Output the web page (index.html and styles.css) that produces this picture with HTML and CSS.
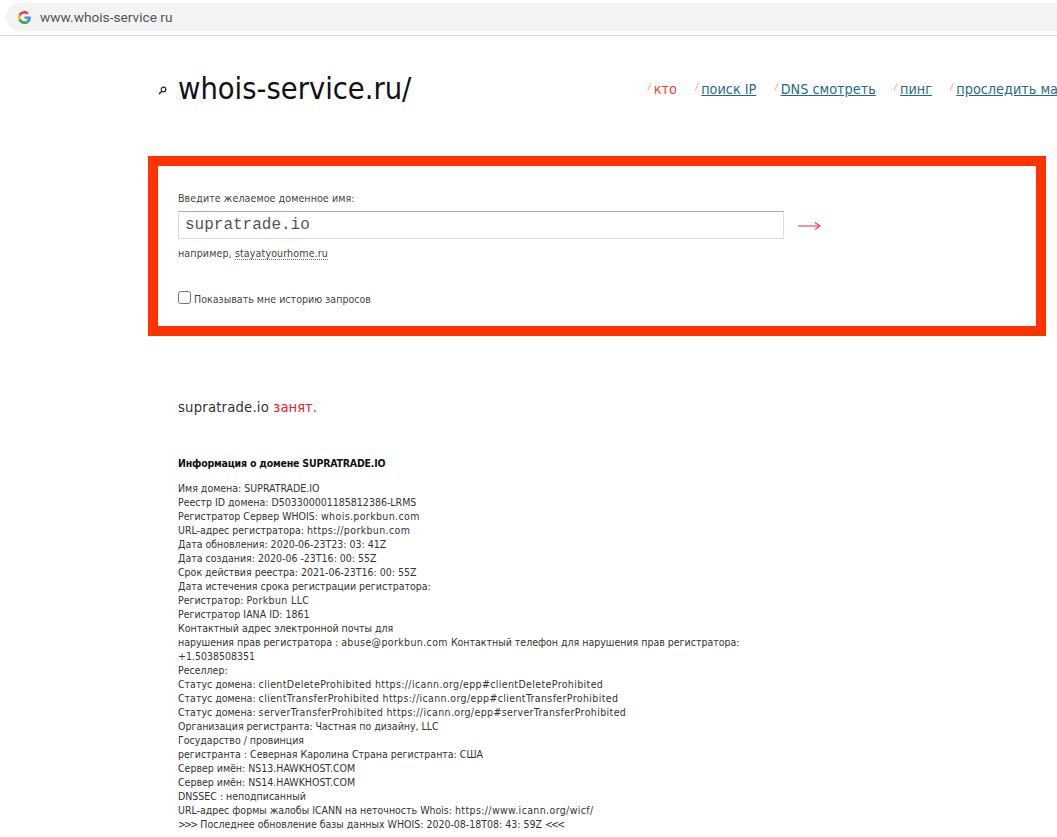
FILE: index.html
```html
<!DOCTYPE html>
<html lang="ru">
<head>
<meta charset="utf-8">
<title>whois-service.ru</title>
<link rel="stylesheet" href="styles.css">
</head>
<body>
<div class="browser-bar">
  <div class="address">
    <svg class="g-logo" width="13" height="13" viewBox="0 0 48 48"><path fill="#EA4335" d="M24 9.500c3.500 0 6.700 1.300 9.100 3.500l6.800-6.800C35.800 2.400 30.300 0 24 0 14.600 0 6.500 5.400 2.600 13.200l7.900 6.100C12.400 13.600 17.700 9.500 24 9.500z"/><path fill="#4285F4" d="M46.900 24.500c0-1.600-.1-3.100-.4-4.500H24v9h12.900c-.6 3-2.200 5.500-4.700 7.200l7.700 6c4.500-4.200 7-10.300 7-17.700z"/><path fill="#FBBC05" d="M10.500 28.700c-.5-1.400-.8-3-.8-4.700s.3-3.200.8-4.700l-7.900-6.100C.9 16.500 0 20.100 0 24s.9 7.500 2.600 10.800l7.900-6.100z"/><path fill="#34A853" d="M24 48c6.500 0 11.900-2.100 15.900-5.800l-7.700-6c-2.200 1.400-4.900 2.300-8.200 2.300-6.300 0-11.600-4.100-13.500-9.800l-7.900 6.100C6.500 42.600 14.600 48 24 48z"/></svg>
    <span class="url">www.whois-service ru</span>
  </div>
</div>
<div class="page">
  <header class="head">
    <div class="brand">
      <svg class="lens" width="9" height="9" viewBox="0 0 9 9"><circle cx="5.500" cy="3.500" r="2.300" fill="none" stroke="#222" stroke-width="1.200"/><path d="M3.800 5.200 1 8" stroke="#222" stroke-width="1.400"/></svg>
      <span class="logo">whois-service.ru/</span>
    </div>
    <nav class="nav">
      <span class="nav-item current"><i>/</i>кто</span>
      <span class="nav-item"><i>/</i><a href="#">поиск IP</a></span>
      <span class="nav-item"><i>/</i><a href="#">DNS смотреть</a></span>
      <span class="nav-item"><i>/</i><a href="#">пинг</a></span>
      <span class="nav-item"><i>/</i><a href="#">проследить маршрут</a></span>
    </nav>
  </header>
  <form class="search">
    <label class="field-label">Введите желаемое доменное имя:</label>
    <div class="field-row">
      <div class="input">supratrade.io</div>
      <svg class="arrow" width="23" height="10" viewBox="0 0 23 10"><path d="M0 5h21" stroke="#e8604f" stroke-width="1.300"/><path d="M17 1.500 22 5l-5 3.500" fill="none" stroke="#e8402f" stroke-width="1.200"/></svg>
    </div>
    <p class="example">например, <span class="dotted">stayatyourhome.ru</span></p>
    <label class="history"><span class="box"></span>Показывать мне историю запросов</label>
  </form>
  <p class="status">supratrade.io <span class="taken">занят.</span></p>
  <h3 class="info-title">Информация о домене SUPRATRADE.IO</h3>
  <div class="info">
    <div>Имя домена: SUPRATRADE.IO</div>
    <div>Реестр ID домена: D503300001185812386-LRMS</div>
    <div>Регистратор Сервер WHOIS: <span class="lat">whois.porkbun.com</span></div>
    <div>URL-адрес регистратора: <span class="lat">https://porkbun.com</span></div>
    <div>Дата обновления: 2020-06-23T23: 03: 41Z</div>
    <div>Дата создания: 2020-06 -23T16: 00: 55Z</div>
    <div>Срок действия реестра: 2021-06-23T16: 00: 55Z</div>
    <div>Дата истечения срока регистрации регистратора:</div>
    <div>Регистратор: <span class="lat">Porkbun LLC</span></div>
    <div>Регистратор IANA ID: 1861</div>
    <div>Контактный адрес электронной почты для</div>
    <div>нарушения прав регистратора : <span class="lat">abuse@porkbun.com</span> Контактный телефон для нарушения прав регистратора:</div>
    <div>+1.5038508351</div>
    <div>Реселлер:</div>
    <div>Статус домена: <span class="lat">clientDeleteProhibited https://icann.org/epp#clientDeleteProhibited</span></div>
    <div>Статус домена: <span class="lat">clientTransferProhibited https://icann.org/epp#clientTransferProhibited</span></div>
    <div>Статус домена: <span class="lat">serverTransferProhibited https://icann.org/epp#serverTransferProhibited</span></div>
    <div>Организация регистранта: Частная по дизайну, LLC</div>
    <div>Государство / провинция</div>
    <div>регистранта : Северная Каролина Страна регистранта: США</div>
    <div>Сервер имён: NS13.HAWKHOST.COM</div>
    <div>Сервер имён: NS14.HAWKHOST.COM</div>
    <div>DNSSEC : неподписанный</div>
    <div>URL-адрес формы жалобы ICANN на неточность Whois: <span class="lat">https://www.icann.org/wicf/</span></div>
    <div><span class="ang">&gt;&gt;&gt;</span> Последнее обновление базы данных WHOIS: 2020-08-18T08: 43: 59Z <span class="ang">&lt;&lt;&lt;</span></div>
  </div>
</div>
</body>
</html>
```
FILE: styles.css
```css
html, body { margin: 0; padding: 0; height: 837px; overflow: hidden; background: #fff; }
body { font-family: "DejaVu Sans Condensed", "DejaVu Sans", sans-serif; color: #333; width: 1057px; }
.browser-bar { padding: 3px 0 0 6px; box-sizing: border-box; border-bottom: 1px solid #dadce0; height: 36px; }
.address { height: 28px; background: #f1f3f4; border-radius: 14px 0 0 14px; display: flex; align-items: center; padding-left: 12px; }
.g-logo { margin-right: 9px; }
.url { font: 13.700px "Roboto", sans-serif; color: #555; }
.page { padding-left: 148px; width: 1000px; }
.head { display: flex; height: 120px; align-items: flex-start; white-space: nowrap; }
.brand { display: flex; align-items: center; width: 498px; padding: 35px 0 0 10px; box-sizing: border-box; }
.lens { margin-right: 11px; margin-top: 4px; }
.logo { font: 30.500px "DejaVu Sans Condensed", "DejaVu Sans", sans-serif; color: #111; }
.nav { display: flex; gap: 18.600px; padding: 45px 0 0 2px; font-size: 14.300px; }
.nav-item i { color: #f08a70; font-size: 9px; margin-right: 3px; vertical-align: 4px; }
.nav-item a { color: #1f6a8f; }
.current { color: #f0442c; }
.search { width: 898px; height: 180px; box-sizing: border-box; border: 10px solid #ff3300; padding: 25px 20px 0; font-size: 10.600px; color: #444; }
.field-label { display: block; height: 20px; line-height: 14px; letter-spacing: .07px; }
.field-row { display: flex; align-items: center; gap: 14px; }
.input { width: 606px; height: 28px; box-sizing: border-box; border: 1px solid #ddd; border-top-color: #aaa; padding-left: 6px; font: 16px/27px "Liberation Mono", monospace; color: #555; }
.arrow { margin-top: 2px; }
.example { margin: 7px 0 0; line-height: 14px; letter-spacing: .12px; }
.dotted { border-bottom: 1px dotted #777; }
.history { display: flex; align-items: center; margin-top: 32px; line-height: 14px; }
.box { width: 11px; height: 11px; border: 1px solid #767676; border-radius: 3px; margin: -4px 3px 0 0; }
.status { margin: 62px 0 0 30px; font-size: 14.700px; line-height: 18px; color: #333; letter-spacing: .2px; }
.taken { color: #e8202a; letter-spacing: 0; }
.info-title { margin: 40px 0 0 30px; font-size: 10.500px; line-height: 14px; font-weight: bold; color: #111; letter-spacing: -.2px; }
.info { margin: 11px 0 0 30px; font-size: 10.500px; line-height: 14px; color: #333; white-space: nowrap; }
.lat { letter-spacing: .38px; }
.ang { letter-spacing: -1.800px; margin-right: 1px; }
```
